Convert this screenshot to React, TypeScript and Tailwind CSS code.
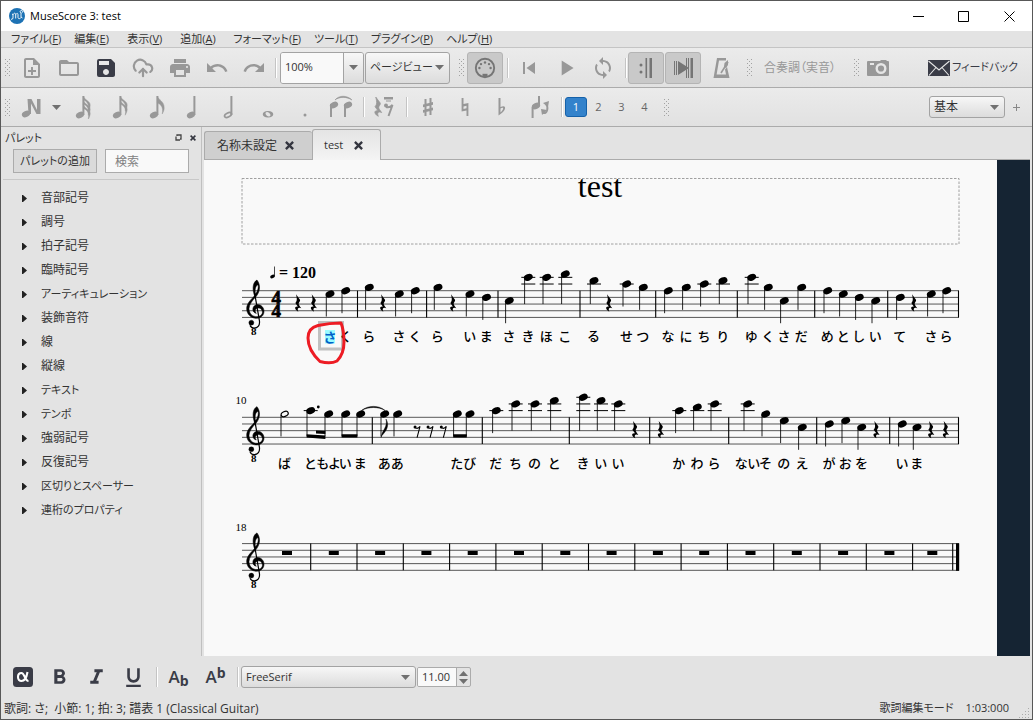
import React from "react";
import {
  MdFolderOpen,
  MdFormatBold,
  MdFormatItalic,
  MdFormatUnderlined,
  MdLoop,
  MdOutlineNoteAdd,
  MdPlayArrow,
  MdPrint,
  MdRedo,
  MdSave,
  MdSkipPrevious,
  MdUndo,
} from "react-icons/md";
import { CloudUpload } from "lucide-react";

/* ---------- Small shared parts ---------- */

const Handle = () => (
  <span className="grid shrink-0 grid-cols-3 gap-px" aria-hidden="true">
    {Array.from({ length: 27 }, (_, i) => (
      <i key={i} className={i % 2 ? "size-px" : "size-px bg-[#a2a2a2]"} />
    ))}
  </span>
);

const Divider = ({ className = "" }: { className?: string }) => (
  <span className={`h-5 w-[2px] shrink-0 border-l border-[#c4c4c4] bg-white ${className}`} />
);

const Tool = ({
  label,
  className = "w-[37px]",
  children,
}: {
  label: string;
  className?: string;
  children: React.ReactNode;
}) => (
  <button type="button" aria-label={label} className={`flex h-8 shrink-0 items-center justify-center ${className}`}>
    {children}
  </button>
);

const Down = () => (
  <svg className="h-[5px] w-[9px] fill-[#707070]" viewBox="0 0 9 5">
    <path d="M0 0H9L4.5 5Z" />
  </svg>
);

const Select = ({
  label,
  options,
  className,
}: {
  label: string;
  options: string[];
  className: string;
}) => (
  <div className={`relative shrink-0 ${className}`}>
    <select
      aria-label={label}
      className="size-full appearance-none rounded-[3px] border border-[#a3a3a3] bg-linear-to-b from-[#f7f7f7] to-[#dcdcdc] pl-1 text-[#333]"
    >
      {options.map((o) => (
        <option key={o}>{o}</option>
      ))}
    </select>
    <span className="pointer-events-none absolute inset-y-0 right-[6px] flex items-center">
      <Down />
    </span>
  </div>
);

/* ---------- Toolbar drawings ---------- */

const Ico = ({ children, w = 24, h = 24 }: { children: React.ReactNode; w?: number; h?: number }) => (
  <svg width={w} height={h} viewBox={`0 0 ${w} ${h}`} fill="currentColor" aria-hidden="true">
    {children}
  </svg>
);

const Head = ({ x, y }: { x: number; y: number }) => (
  <ellipse cx={x} cy={y} rx="4.3" ry="3" transform={`rotate(-24 ${x} ${y})`} />
);

const Flagged = ({ flags }: { flags: number }) => (
  <Ico>
    <Head x={9} y={20} />
    <path d="M11.4 1h2v19h-2z" />
    {Array.from({ length: flags }, (_, i) => (
      <path
        key={i}
        d={`M12.4 ${1 + i * 4.2}c.8 4 7 5 6.8 ${flags > 1 ? 9 : 12}c0 2-.8 4-2 6c1.4-7-1.4-9.500-4.800-11z`}
        stroke="currentColor"
        strokeWidth=".4"
      />
    ))}
  </Ico>
);

const NoteInput = () => (
  <Ico>
    <Head x={6} y={19} />
    <path d="M7.500 4h4l5.500 11V4h3.500v15h-4L11 8.500V19H8.500z" />
  </Ico>
);

const Midi = () => (
  <Ico>
    <circle cx="12" cy="12" r="9.200" fill="none" stroke="currentColor" strokeWidth="1.900" />
    <circle cx="6.400" cy="12" r="1.200" />
    <circle cx="8" cy="8.100" r="1.200" />
    <circle cx="12" cy="6.500" r="1.200" />
    <circle cx="16" cy="8.100" r="1.200" />
    <circle cx="17.600" cy="12" r="1.200" />
    <path d="M9.500 21v-3.200h5V21z" />
  </Ico>
);

const RepeatIcon = () => (
  <Ico>
    <circle cx="7" cy="9" r="1.500" />
    <circle cx="7" cy="16" r="1.500" />
    <path d="M11.500 2h1.600v20h-1.600zM15.500 2H18v20h-2.500z" />
  </Ico>
);

const PanIcon = () => (
  <Ico>
    <path d="M3 5h1v14H3zM5 5h1v14H5zM7 5l11 7L7 19zM15 2h1v20h-1zM17 2h1v20h-1zM19.500 2H22v20h-2.500z" />
  </Ico>
);

const Metronome = () => (
  <Ico>
    <path fillRule="evenodd" d="M8 2h9v2.500H10L7.600 18.500H17l-1-5 2-2.500 2.500 11H4.500z" />
    <path d="M12 17L19 6" fill="none" stroke="currentColor" strokeWidth="1.600" />
    <path d="M15.500 7l3.500-3v5l-2 3-2-1z" />
  </Ico>
);

const Camera = () => (
  <Ico>
    <path
      fillRule="evenodd"
      d="M2 5h12l1-1h5l1 1h1q1 0 1 1v13q0 1-1 1H2q-1 0-1-1V6q0-1 1-1zm2 2v2h4V7zm11 0a5.500 5.500 0 100 11 5.500 5.500 0 000-11zm0 2.400a3.100 3.100 0 110 6.200 3.100 3.100 0 010-6.200z"
    />
  </Ico>
);

const Envelope = () => (
  <Ico>
    <path d="M1 4h22v16H1z" />
    <path d="M1.500 5L12 14 22.500 5M2 19.500l7-8M22 19.500l-7-8" fill="none" stroke="#e6e6e6" strokeWidth="1.100" />
  </Ico>
);

const QuarterRest = () => (
  <path d="M-6 11L6 27C8 31 2 35 2 39C2 43 7 48 10 53C2 49-4 53 1 63C-12 56-11 46 0 48L-8 37C-2 31-3 24-6 11Z" />
);

const TieIcon = () => (
  <Ico w={26}>
    <Head x={5} y={10} />
    <Head x={19} y={10} />
    <path d="M1 9h2v13H1zM15 9h2v13h-2z" />
    <path d="M6 5C10 0 18 0 23 5 18 1.500 10 1.500 6 5z" stroke="currentColor" strokeWidth=".6" />
  </Ico>
);

const RestIcon = () => (
  <Ico>
    <g transform="translate(6 -2) scale(.37)" stroke="currentColor" strokeWidth="2">
      <QuarterRest />
    </g>
    <path d="M12 2h9v2.500h-9zM14 5.500h5v1h-5z" />
    <circle cx="14" cy="10.500" r="2" />
    <path d="M14 12q4 1 6.500-2L16.500 21" fill="none" stroke="currentColor" strokeWidth="2" />
  </Ico>
);

const FlipIcon = () => (
  <Ico>
    <path d="M8 1h2v9H8zM1.600 12h2v11h-2z" />
    <Head x={6} y={11} />
    <path d="M13 18c4 1 6-5 3-9" fill="none" stroke="currentColor" strokeWidth="1.800" />
    <path d="M13 8l6-2-1 6zM17 15l-6-1 1 6z" />
  </Ico>
);

/* ---------- Score ---------- */

const STEP = 3.34;

type Note = { x: number; s: number; t?: string; kind?: "half" | "beamed" };

const parse = (src: string): Note[] =>
  src
    .trim()
    .split(/\s+/)
    .map((n) => {
      const [x, s, t] = n.split(",");
      return { x: Number(x), s: Number(s), t };
    });

const SYSTEM_1 = parse(
  "330,1 345.7,0,く 369.3,-1,ら 399.3,1,さ 415.3,0,く 438,-1,ら 470,1,い 486.5,2,ま 509.3,3,さ 528.3,-4,き 546.7,-4,ほ 565.3,-5,こ 594,-3,る 626.7,-2,せ 643.3,-1,つ 668.3,0,な 686.3,-1,に 704.3,-2,ち 723,-3,り 751.7,-4,ゆ 768.3,-1,く 784.3,3,さ 801.7,-1,だ 827.7,0,め 843.3,1,と 859.3,2,し 875.7,3,い 900.3,2,て 931.3,1,さ 946.7,0,ら",
);

const SYSTEM_2: Note[] = [
  { x: 284.7, s: -1, t: "ば", kind: "half" },
  ...parse("310.7,-2,と 328.7,-1,もよ 345.7,-1,い 360.7,-1,ま 457.3,-1,た 470,-1,び").map((n) => ({
    ...n,
    kind: "beamed" as const,
  })),
  ...parse(
    "384.7,-1,あ 397.7,-1,あ 496.3,-2,だ 515.7,-4,ち 535,-4,の 554.3,-5,と 583.3,-6,き 601,-5,い 618.3,-4,い 679.3,-2,か 697.3,-3,わ 714.7,-4,ら 747.7,-4,ない 765.7,-1,そ 784.3,1,の 802.3,3,え 829.3,2,が 845.7,1,お 861.7,3,を 902.3,2,い 917,3,ま",
  ),
];

const Clef = () => (
  <g stroke="#000">
    <path
      d="M58 14C50-12 56-27 66-32C77-18 76 2 63 18C53 28 43 40 42 54C42 68 52 78 66 78C78 77 84 69 82 62C80 54 74 51 69 52C60 54 58 62 64 68C51 66 50 48 62 43C74 38 87 48 87 62C87 74 78 83 65 83C48 83 35 70 35 54C35 38 48 27 56 18C66 6 72-6 69-18C62-16 58-4 62 12Z"
      strokeWidth="1.600"
    />
    <path d="M59 8L73 88C76 104 68 112 57 112C51 112 47 108 45 104" fill="none" strokeWidth="3.600" />
    <circle cx="49" cy="96" r="7.500" />
  </g>
);

const Staff = ({
  top,
  bars,
  rests,
  notes,
}: {
  top: number;
  bars: number[];
  rests: number[];
  notes: Note[];
}) => (
  <g>
    {[0, 2, 4, 6, 8].map((i) => (
      <line key={i} x1="242" x2="959" y1={top + i * STEP} y2={top + i * STEP} stroke="#222" strokeWidth=".75" />
    ))}
    {bars.map((x) => (
      <line key={x} x1={x} x2={x} y1={top} y2={top + 8 * STEP} stroke="#000" strokeWidth="1.100" />
    ))}
    <g transform={`translate(235 ${top}) scale(.3333)`}>
      <Clef />
    </g>
    <text x="253.700" y={top + 44.5} textAnchor="middle" fontSize="11" fontWeight="700">
      8
    </text>
    {rests.map((x) => (
      <g key={x} transform={`translate(${x} ${top}) scale(.3333)`}>
        <QuarterRest />
      </g>
    ))}
    {notes.map((n) => {
      const y = top + n.s * STEP;
      const end = n.kind === "beamed" ? top + 19 : Math.max(y + 22.5, top + 4 * STEP);
      return (
        <g key={n.x}>
          {[-2, -4, -6]
            .filter((l) => n.s <= l)
            .map((l) => (
              <line key={l} x1={n.x - 7} x2={n.x + 7} y1={top + l * STEP} y2={top + l * STEP} stroke="#000" strokeWidth="1" />
            ))}
          <line x1={n.x - 3.7} x2={n.x - 3.7} y1={y + 1} y2={end} stroke="#000" strokeWidth=".85" />
          {n.kind === "half" ? (
            <ellipse cx={n.x} cy={y} rx="3.700" ry="2.400" fill="none" stroke="#000" strokeWidth="1.200" transform={`rotate(-24 ${n.x} ${y})`} />
          ) : (
            <ellipse cx={n.x} cy={y} rx="4.600" ry="3.300" transform={`rotate(-22 ${n.x} ${y})`} />
          )}
          {n.t && (
            <text x={n.x - 0.5} y={top + 50.5} textAnchor="middle" fontSize="13" fontWeight="500">
              {n.t}
            </text>
          )}
        </g>
      );
    })}
  </g>
);

const EMPTY_BARS = Array.from({ length: 14 }, (_, k) => 310.7 + 46.3 * k);
const EMPTY_RESTS = [287, ...Array.from({ length: 13 }, (_, k) => 333.8 + 46.3 * k), 932.3];

const Score = () => (
  <svg
    viewBox="204 160 793 496"
    className="block h-auto w-full font-['Liberation_Serif','Noto_Sans_CJK_JP',serif]"
    role="img"
    aria-label="test"
  >
    <rect x="242" y="178.500" width="717" height="65.500" fill="none" stroke="#a0a0a0" strokeDasharray="2.500 1.500" />
    <text x="600" y="196.500" textAnchor="middle" fontSize="32">
      test
    </text>
    <ellipse cx="272.500" cy="276.500" rx="2.400" ry="1.700" transform="rotate(-22 272.500 276.500)" />
    <path d="M274.500 266.500V276.500" stroke="#000" strokeWidth=".7" />
    <text x="279" y="278" fontSize="16" fontWeight="700">
      = 120
    </text>
    <text textAnchor="middle" fontSize="19" fontWeight="700" stroke="#000" strokeWidth=".7">
      <tspan x="276.300" y="303.700">4</tspan>
      <tspan x="276.300" y="317.300">4</tspan>
    </text>

    <path d="M319.500 322.500h23v26.500h-23z" fill="#f9f9f9" stroke="#c0c0c0" strokeWidth="3" />
    <path d="M325 330h10v13.500h-10z" fill="#9cfbff" />
    <text x="330" y="341.700" textAnchor="middle" fontSize="13" fill="#0060c8" fontWeight="700">
      さ
    </text>
    <Staff
      top={290.7}
      bars={[357.5, 426.6, 498, 580, 655.7, 737.3, 814.7, 887.7, 958.5]}
      rests={[298, 313.7, 383, 453, 609, 914]}
      notes={SYSTEM_1}
    />
    <path
      d="M341 323C334 323 325 324 318 325.500C312 327 308 331 308 338C308 347 312 354 320 361.500C326 363 333 363 337 361C342 356 344 350 344 342C344 334 343 328 341 323Z"
      fill="none"
      stroke="#ed1c24"
      strokeWidth="3"
      strokeLinejoin="round"
    />

    <text x="235.500" y="404" fontSize="11">
      10
    </text>
    <Staff
      top={417.3}
      bars={[372.3, 482.3, 569.3, 649.7, 728.7, 816.7, 889.7, 958.5]}
      rests={[635, 660.7, 876.3, 931, 945.7]}
      notes={SYSTEM_2}
    />
    <circle cx="318.300" cy="407" r="1.400" />
    <path d="M306.600 434.300L325.400 435.500V439L306.600 437.500ZM316 430.500L325.400 431V434L316 433.500ZM341.600 434.300H357.400V437.500H341.600ZM453.200 434.300H466.800V437.500H453.200Z" />
    <path d="M361.500 410.500C368 405 379 405 385 410.500C379 406.500 368 406.500 361.500 410.500Z" stroke="#000" strokeWidth=".5" />
    <path d="M381 437.500C382 430 388 427 386 419C390 426 386 431 382 435.500Z" stroke="#000" strokeWidth=".4" />
    {[416.7, 429.7, 443].map((x) => (
      <g key={x} transform={`translate(${x} 417.300) scale(.3333)`}>
        <circle cx="-5" cy="29" r="4.500" />
        <path d="M-6 31C1 35 7 32 10 27L1 61" fill="none" stroke="#000" strokeWidth="3.200" />
      </g>
    ))}

    <text x="235.500" y="531" fontSize="11">
      18
    </text>
    <Staff top={543.6} bars={[...EMPTY_BARS, 952.7]} rests={[]} notes={[]} />
    {EMPTY_RESTS.map((x) => (
      <rect key={x} x={x - 5} y="551" width="10" height="4" />
    ))}
    <rect x="956" y="543.300" width="3.200" height="27.500" />
  </svg>
);

/* ---------- Window ---------- */

const MENUS: [string, string][] = [
  ["ファイル", "F"],
  ["編集", "E"],
  ["表示", "V"],
  ["追加", "A"],
  ["フォーマット", "F"],
  ["ツール", "T"],
  ["プラグイン", "P"],
  ["ヘルプ", "H"],
];

const PALETTES = [
  "音部記号",
  "調号",
  "拍子記号",
  "臨時記号",
  "アーティキュレーション",
  "装飾音符",
  "線",
  "縦線",
  "テキスト",
  "テンポ",
  "強弱記号",
  "反復記号",
  "区切りとスペーサー",
  "連桁のプロパティ",
];

const hasKatakana = (s: string) => /[ァ-ー]/.test(s);

const BAR = "flex items-center border-b border-[#ababab] bg-linear-to-b from-[#ebebeb] to-[#e1e1e1]";
const PRESSED = "w-9 rounded-[3px] border border-[#b4b4b4] bg-[#c9c9c9] text-[#757575]";

const Cross = ({ className }: { className: string }) => (
  <svg className={className} viewBox="0 0 10 10" fill="none" stroke="#33353f" strokeWidth="2.600">
    <path d="M1 1L9 9M9 1L1 9" />
  </svg>
);

export default function App() {
  return (
    <div className="flex min-h-screen flex-col border border-[#585858] bg-[#e3e3e3] font-['Open_Sans','Noto_Sans_CJK_JP',sans-serif] text-xs text-[#333] [font-feature-settings:'palt']">
      <header className="flex h-[30px] items-center bg-white pl-2 text-black">
        <svg className="size-4" viewBox="0 0 16 16">
          <circle cx="8" cy="8" r="8" fill="#1d72b4" />
          <path
            d="M2 11.500l2-1V6l-1 .5M4 6.500C5.500 4.500 6.700 5 6.700 7v3.500M6.700 6.500C8.500 4.500 9 5.500 9 7v2.500c0 1.500 2.500 1.500 3 0V5M12 5c-1.500-1-1-2.500.5-2.500s1.500 2 0 2.500M12 9l1.500 1"
            fill="none"
            stroke="#fff"
            strokeWidth=".9"
          />
        </svg>
        <h1 className="ml-[5px] grow text-[11px]">MuseScore 3: test</h1>
        <button type="button" aria-label="最小化" className="flex h-full w-[46px] items-center justify-center">
          <svg className="size-[11px]" viewBox="0 0 11 11">
            <path d="M0 5.500H11" stroke="#000" />
          </svg>
        </button>
        <button type="button" aria-label="最大化" className="flex h-full w-[45px] items-center justify-center">
          <svg className="size-[11px]" viewBox="0 0 11 11">
            <path d="M.5.500h10v10H.5z" fill="none" stroke="#000" />
          </svg>
        </button>
        <button type="button" aria-label="閉じる" className="flex h-full w-[46px] items-center justify-center">
          <svg className="size-[11px]" viewBox="0 0 11 11">
            <path d="M.5.500l10 10M10.500.500l-10 10" stroke="#000" />
          </svg>
        </button>
      </header>

      <nav className="flex h-[17px] items-center gap-[13px] border-b border-[#c4c4c4] pl-[10px] text-[11px]">
        {MENUS.map(([name, key]) => (
          <button key={name} type="button" className="min-w-10 whitespace-nowrap text-left leading-4">
            {name}(<u>{key}</u>)
          </button>
        ))}
      </nav>

      <div className={`${BAR} h-10 pl-1 text-[#989898]`}>
        <Handle />
        <div className="ml-[3px] flex">
          <Tool label="新規"><MdOutlineNoteAdd size={24} /></Tool>
          <Tool label="開く"><MdFolderOpen size={24} /></Tool>
          <Tool label="保存"><MdSave size={24} className="text-[#3a3c47]" /></Tool>
          <Tool label="オンライン保存"><CloudUpload size={22} strokeWidth={2.4} /></Tool>
          <Tool label="印刷"><MdPrint size={24} /></Tool>
          <Tool label="元に戻す"><MdUndo size={24} /></Tool>
          <Tool label="やり直し"><MdRedo size={24} /></Tool>
        </div>
        <Divider className="ml-[3px]" />
        <div className="ml-[3px] flex h-8 w-[84px] shrink-0 overflow-hidden rounded-[3px] border border-[#a3a3a3]">
          <input aria-label="ズーム" defaultValue="100%" className="w-0 min-w-0 grow bg-[#f9f9f9] pl-1 text-[11px] text-[#333]" />
          <button
            type="button"
            aria-label="ズーム一覧"
            className="flex w-5 shrink-0 items-center justify-center border-l border-[#a3a3a3] bg-linear-to-b from-[#f7f7f7] to-[#dcdcdc]"
          >
            <Down />
          </button>
        </div>
        <Select label="表示" options={["ページビュー"]} className="ml-px h-8 w-[85px] text-[11px]" />
        <span className="ml-[9px]"><Handle /></span>
        <span className="ml-[3px]"><Tool label="MIDI入力" className={PRESSED}><Midi /></Tool></span>
        <Divider className="ml-1" />
        <div className="ml-px flex">
          <Tool label="先頭へ"><MdSkipPrevious size={24} /></Tool>
          <Tool label="再生"><MdPlayArrow size={26} /></Tool>
          <Tool label="ループ"><MdLoop size={24} /></Tool>
        </div>
        <Divider className="ml-1" />
        <div className="ml-px flex gap-px">
          <Tool label="反復再生" className={PRESSED}><RepeatIcon /></Tool>
          <Tool label="パン" className={PRESSED}><PanIcon /></Tool>
          <Tool label="メトロノーム"><Metronome /></Tool>
        </div>
        <span className="ml-2"><Handle /></span>
        <button type="button" className="ml-3 w-[76px] whitespace-nowrap text-left">合奏調（実音）</button>
        <span className="ml-[14px]"><Handle /></span>
        <Tool label="画像キャプチャ"><Camera /></Tool>
        <button type="button" className="ml-auto mr-[14px] flex items-center gap-px whitespace-nowrap text-[11px] text-[#3a3c47]">
          <Envelope />
          フィードバック
        </button>
      </div>

      <div className={`${BAR} h-[39px] pl-1 text-[#989898]`}>
        <Handle />
        <div className="ml-[3px] flex">
          <Tool label="音符入力"><NoteInput /></Tool>
          <Tool label="入力方法" className="w-3"><Down /></Tool>
          <Tool label="64分音符" className="ml-[2px] w-[37px]"><Flagged flags={3} /></Tool>
          <Tool label="16分音符"><Flagged flags={2} /></Tool>
          <Tool label="8分音符"><Flagged flags={1} /></Tool>
          <Tool label="4分音符"><Flagged flags={0} /></Tool>
          <Tool label="2分音符">
            <Ico>
              <ellipse cx="9" cy="20" rx="3.700" ry="2" fill="none" stroke="currentColor" strokeWidth="1.700" transform="rotate(-26 9 20)" />
              <path d="M11.400 1h2v19h-2z" />
            </Ico>
          </Tool>
          <Tool label="全音符">
            <Ico>
              <path fillRule="evenodd" d="M12 16c7 0 7 6.500 0 6.500s-7-6.500 0-6.500zm-1 1c-3 0-1 4.500 2 4.500s1-4.500-2-4.500z" />
            </Ico>
          </Tool>
          <Tool label="付点"><Ico><circle cx="12" cy="20" r="1.500" /></Ico></Tool>
          <Tool label="タイ"><TieIcon /></Tool>
        </div>
        <Divider className="ml-[3px]" />
        <Tool label="休符"><RestIcon /></Tool>
        <Divider className="ml-1" />
        <div className="ml-px flex">
          <Tool label="シャープ">
            <Ico><path d="M8.500 4h2v17h-2zM13.500 3h2v17h-2zM7 9.500l10-2.500v2.800L7 12.300zM7 15l10-2.500v2.800L7 17.800z" /></Ico>
          </Tool>
          <Tool label="ナチュラル">
            <Ico><path fillRule="evenodd" d="M8.600 3h1.900v6l4.900-1V21h-1.900v-5.500l-4.900 1zm1.900 8.500V14l3-.8v-2.500z" /></Ico>
          </Tool>
          <Tool label="フラット">
            <Ico><path fillRule="evenodd" d="M8.500 3h2v9c6-3 7 3-2 8.500zm2 10.500v4c4-3.500 3-6 0-4z" /></Ico>
          </Tool>
          <Tool label="方向を反転" className="w-10 pl-1"><FlipIcon /></Tool>
        </div>
        <Divider className="ml-px" />
        <div className="ml-[2px] flex text-[11px] text-[#666]">
          <button type="button" className="h-5 w-[22px] rounded-[3px] border border-[#1561a9] bg-[#3382cb] text-white">1</button>
          {[2, 3, 4].map((v) => (
            <button key={v} type="button" className="h-5 w-[23px]">{v}</button>
          ))}
        </div>
        <span className="ml-2"><Handle /></span>
        <Select label="ワークスペース" options={["基本"]} className="ml-auto h-[22px] w-[76px]" />
        <button type="button" aria-label="ワークスペースを追加" className="ml-2 mr-3">
          <svg className="size-[7px]" viewBox="0 0 7 7"><path d="M3.500 0v7M0 3.500h7" stroke="#888" /></svg>
        </button>
      </div>

      <div className="flex grow">
        <aside className="flex w-[201px] shrink-0 flex-col border-r border-[#c0c0c0]">
          <div className="flex h-[21px] items-center pl-1 pr-[5px]">
            <h2 className="grow text-[11px] leading-4">パレット</h2>
            <button type="button" aria-label="フロート" className="mr-2">
              <svg className="size-[7px]" viewBox="0 0 7 7" fill="none" stroke="#444" strokeWidth="1.300">
                <path d="M2 2V1h4v4H5M1 2.500V6h4" />
              </svg>
            </button>
            <button type="button" aria-label="パレットを閉じる"><Cross className="size-[6px]" /></button>
          </div>
          <div className="mx-3 flex gap-2 pt-px">
            <button type="button" className="h-6 w-[84px] whitespace-nowrap border border-[#ababab] bg-[#dadada] text-[11px]">
              パレットの追加
            </button>
            <input
              aria-label="検索"
              placeholder="検索"
              className="h-6 w-[84px] border border-[#ababab] bg-[#f9f9f9] pl-[9px] placeholder:text-[#808080]"
            />
          </div>
          <hr className="mx-[2px] mt-[6px] mb-[6px] border-[#c8c8c8]" />
          <ul>
            {PALETTES.map((p) => (
              <li key={p}>
                <button
                  type="button"
                  className={`flex h-6 w-full items-center gap-[14px] whitespace-nowrap pl-[21px] ${hasKatakana(p) ? "text-[11px]" : "text-xs"}`}
                >
                  <svg className="h-[7px] w-[5px]" viewBox="0 0 5 7"><path d="M0 0h1l4 3.500L1 7H0z" fill="#222" /></svg>
                  {p}
                </button>
              </li>
            ))}
          </ul>
        </aside>

        <main className="ml-[2px] flex min-w-0 grow flex-col pr-[2px]">
          <div className="flex h-[33px] items-end" role="tablist">
            <div className="flex h-[29px] w-[108px] items-center justify-between rounded-t-[3px] border border-r-0 border-[#ababab] bg-[#cfcfcf] pl-3 pr-[18px]">
              <button type="button" role="tab" aria-selected="false">名称未設定</button>
              <button type="button" aria-label="名称未設定を閉じる"><Cross className="size-[9px]" /></button>
            </div>
            <div className="flex h-[31px] w-[69px] items-center justify-between rounded-t-[3px] border border-b-0 border-[#ababab] bg-linear-to-b from-[#e4e4e4] to-[#f4f4f4] pl-[11px] pr-[17px] text-[11px]">
              <button type="button" role="tab" aria-selected="true">test</button>
              <button type="button" aria-label="testを閉じる"><Cross className="size-[9px]" /></button>
            </div>
            <span className="h-px grow bg-[#ababab]" />
          </div>
          <div className="flex grow">
            <div className="min-w-0 grow bg-[#f9f9f9]"><Score /></div>
            <div className="w-[33px] shrink-0 bg-[#152433]" />
          </div>
        </main>
      </div>

      <div className="flex h-[42px] items-center pl-[3px] text-[#3a3c47]">
        <Tool label="特殊文字">
          <svg className="size-5" viewBox="0 0 20 20">
            <rect width="20" height="20" rx="3.500" fill="#3a3c47" />
            <path
              d="M14.500 5C13.500 11 11.500 14 8.500 14C6.500 14 5 12.500 5 10C5 7.500 6.500 6 8.500 6C11.500 6 12 14 15.500 14"
              fill="none"
              stroke="#fff"
              strokeWidth="2.100"
            />
          </svg>
        </Tool>
        <Tool label="太字"><MdFormatBold size={25} /></Tool>
        <Tool label="斜体"><MdFormatItalic size={25} /></Tool>
        <Tool label="下線"><MdFormatUnderlined size={25} /></Tool>
        <Divider className="ml-1 mr-[2px]" />
        <Tool label="下付き">
          <span className="text-[17px] font-semibold leading-5">A<span className="align-[-3px] text-sm font-bold leading-3">b</span></span>
        </Tool>
        <Tool label="上付き">
          <span className="text-[17px] font-semibold leading-5">A<span className="align-[5px] text-sm font-bold leading-3">b</span></span>
        </Tool>
        <Divider className="ml-[3px]" />
        <Select label="フォント" options={["FreeSerif"]} className="ml-[2px] h-[22px] w-[175px] text-[11px]" />
        <div className="ml-px flex h-5 w-[54px] shrink-0 overflow-hidden rounded-[2px] border border-[#ababab]">
          <input aria-label="フォントサイズ" defaultValue="11.00" className="w-0 min-w-0 grow bg-[#f9f9f9] pl-1 text-[11px] text-[#333]" />
          <span className="flex w-[14px] shrink-0 flex-col items-center justify-center gap-[3px] border-l border-[#ababab]">
            <button type="button" aria-label="大きく" className="rotate-180"><Down /></button>
            <button type="button" aria-label="小さく"><Down /></button>
          </span>
        </div>
      </div>

      <footer className="flex h-[21px] items-center whitespace-pre pl-[3px] pr-[2px]">
        <span className="grow">{"歌詞: さ;  小節: 1; 拍: 3; 譜表 1 (Classical Guitar)"}</span>
        <span className="text-[11px]">歌詞編集モード</span>
        <span className="ml-3 mr-[10px] text-[11px]">1:03:000</span>
        <svg className="size-[11px] self-end" viewBox="0 0 11 11" fill="#aaa">
          <path d="M9 0h1v1H9zM6 3h1v1H6zM9 3h1v1H9zM3 6h1v1H3zM6 6h1v1H6zM9 6h1v1H9zM0 9h1v1H0zM3 9h1v1H3zM6 9h1v1H6zM9 9h1v1H9z" />
        </svg>
      </footer>
    </div>
  );
}
